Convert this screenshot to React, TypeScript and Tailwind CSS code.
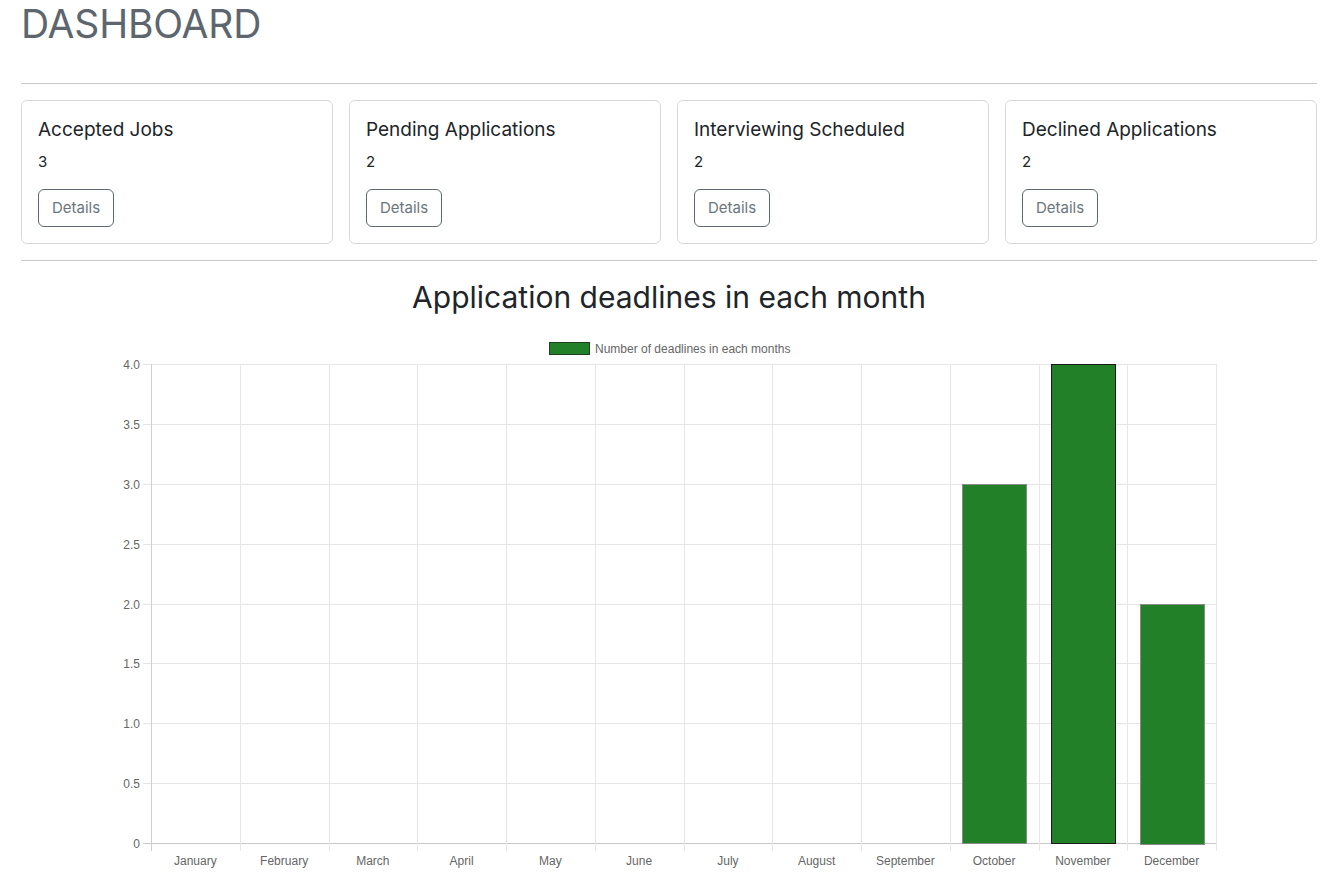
import React from 'react';

const stats = [
    { title: 'Accepted Jobs', count: 3 },
    { title: 'Pending Applications', count: 2 },
    { title: 'Interviewing Scheduled', count: 2 },
    { title: 'Declined Applications', count: 2 },
];

const months = [
    'January', 'February', 'March', 'April', 'May', 'June',
    'July', 'August', 'September', 'October', 'November', 'December',
];
const deadlines = [0, 0, 0, 0, 0, 0, 0, 0, 0, 3, 4, 2];
const barBorders = ['#888', '#888', '#888', '#888', '#888', '#888', '#888', '#888', '#888', '#8a8a8a', '#1a1a1a', '#8a8a8a'];

// plot box inside the svg
const L = 130;
const R = 1195;
const T = 49;
const B = 528;
const step = (R - L) / 12;
const unit = (B - T) / 4;

function DeadlineChart() {
    const yTicks = [0, 0.5, 1, 1.5, 2, 2.5, 3, 3.5, 4];
    return (
        <svg width="1296" height="561" className="block" style={{ fontFamily: '"Liberation Sans", Arial, sans-serif' }}>
            {/* legend */}
            <rect x="528.5" y="27.5" width="40" height="12" fill="#228028" stroke="#1f3f1f" strokeWidth="1" />
            <text x="574" y="37.5" fontSize="12" fill="#666">Number of deadlines in each months</text>

            {/* horizontal grid */}
            {yTicks.map((v) => {
                const y = Math.round(B - v * unit) + 0.5;
                return (
                    <g key={v}>
                        <line x1={L - 8} x2={R} y1={y} y2={y} stroke={v === 0 ? '#c8c8c8' : '#e6e6e6'} />
                        <text x={L - 11} y={y + 4} fontSize="12" fill="#666" textAnchor="end">
                            {v === 0 ? '0' : v.toFixed(1)}
                        </text>
                    </g>
                );
            })}

            {/* vertical grid */}
            {Array.from({ length: 13 }).map((_, i) => {
                const x = Math.round(L + i * step) + 0.5;
                return <line key={i} x1={x} x2={x} y1={T} y2={B + 8} stroke={i === 0 ? '#d0d0d0' : '#e6e6e6'} />;
            })}

            {/* bars */}
            {deadlines.map((v, i) => {
                if (!v) return null;
                const w = step * 0.72;
                const x = L + step * (i + 0.5) - w / 2;
                const h = v * unit;
                return (
                    <rect
                        key={i}
                        x={Math.round(x) + 0.5}
                        y={Math.round(B - h) + 0.5}
                        width={Math.round(w)}
                        height={Math.round(h)}
                        fill="#228028"
                        stroke={barBorders[i]}
                        strokeWidth="1"
                    />
                );
            })}

            {/* month labels */}
            {months.map((m, i) => (
                <text key={m} x={L + step * (i + 0.5)} y={550} fontSize="12" fill="#666" textAnchor="middle">
                    {m}
                </text>
            ))}
        </svg>
    );
}

export default function App() {
    return (
        <div className="bg-white min-h-screen" style={{ fontFamily: 'Inter, "Liberation Sans", sans-serif' }}>
            <div className="mx-[21px] w-[1296px]">
                <h1 className="text-[39px] leading-[48px] font-normal text-[#5d666e] tracking-[-0.2px]">DASHBOARD</h1>
                <hr className="mt-[35px] border-t border-[#c8c8c8]" />

                {/* 카드 목록 */}
                <div className="grid grid-cols-4 gap-4 mt-4">
                    {stats.map((s) => (
                        <div key={s.title} className="border border-[#d6d8da] rounded-md px-4 pt-[17px] pb-4">
                            <h5 className="text-[19px] leading-6 font-normal text-[#212529] mb-2">{s.title}</h5>
                            <p className="text-[15px] leading-6 text-[#212529] mb-[15px]">{s.count}</p>
                            <button className="h-[38px] px-[13px] border border-[#5f6870] rounded-md text-[15px] text-[#6c757d]">
                                Details
                            </button>
                        </div>
                    ))}
                </div>

                <hr className="mt-4 border-t border-[#c8c8c8]" />

                <h2 className="mt-[18px] text-center text-[30px] leading-9 font-normal text-[#212529]">
                    Application deadlines in each month
                </h2>
                <DeadlineChart />
            </div>
        </div>
    );
}
